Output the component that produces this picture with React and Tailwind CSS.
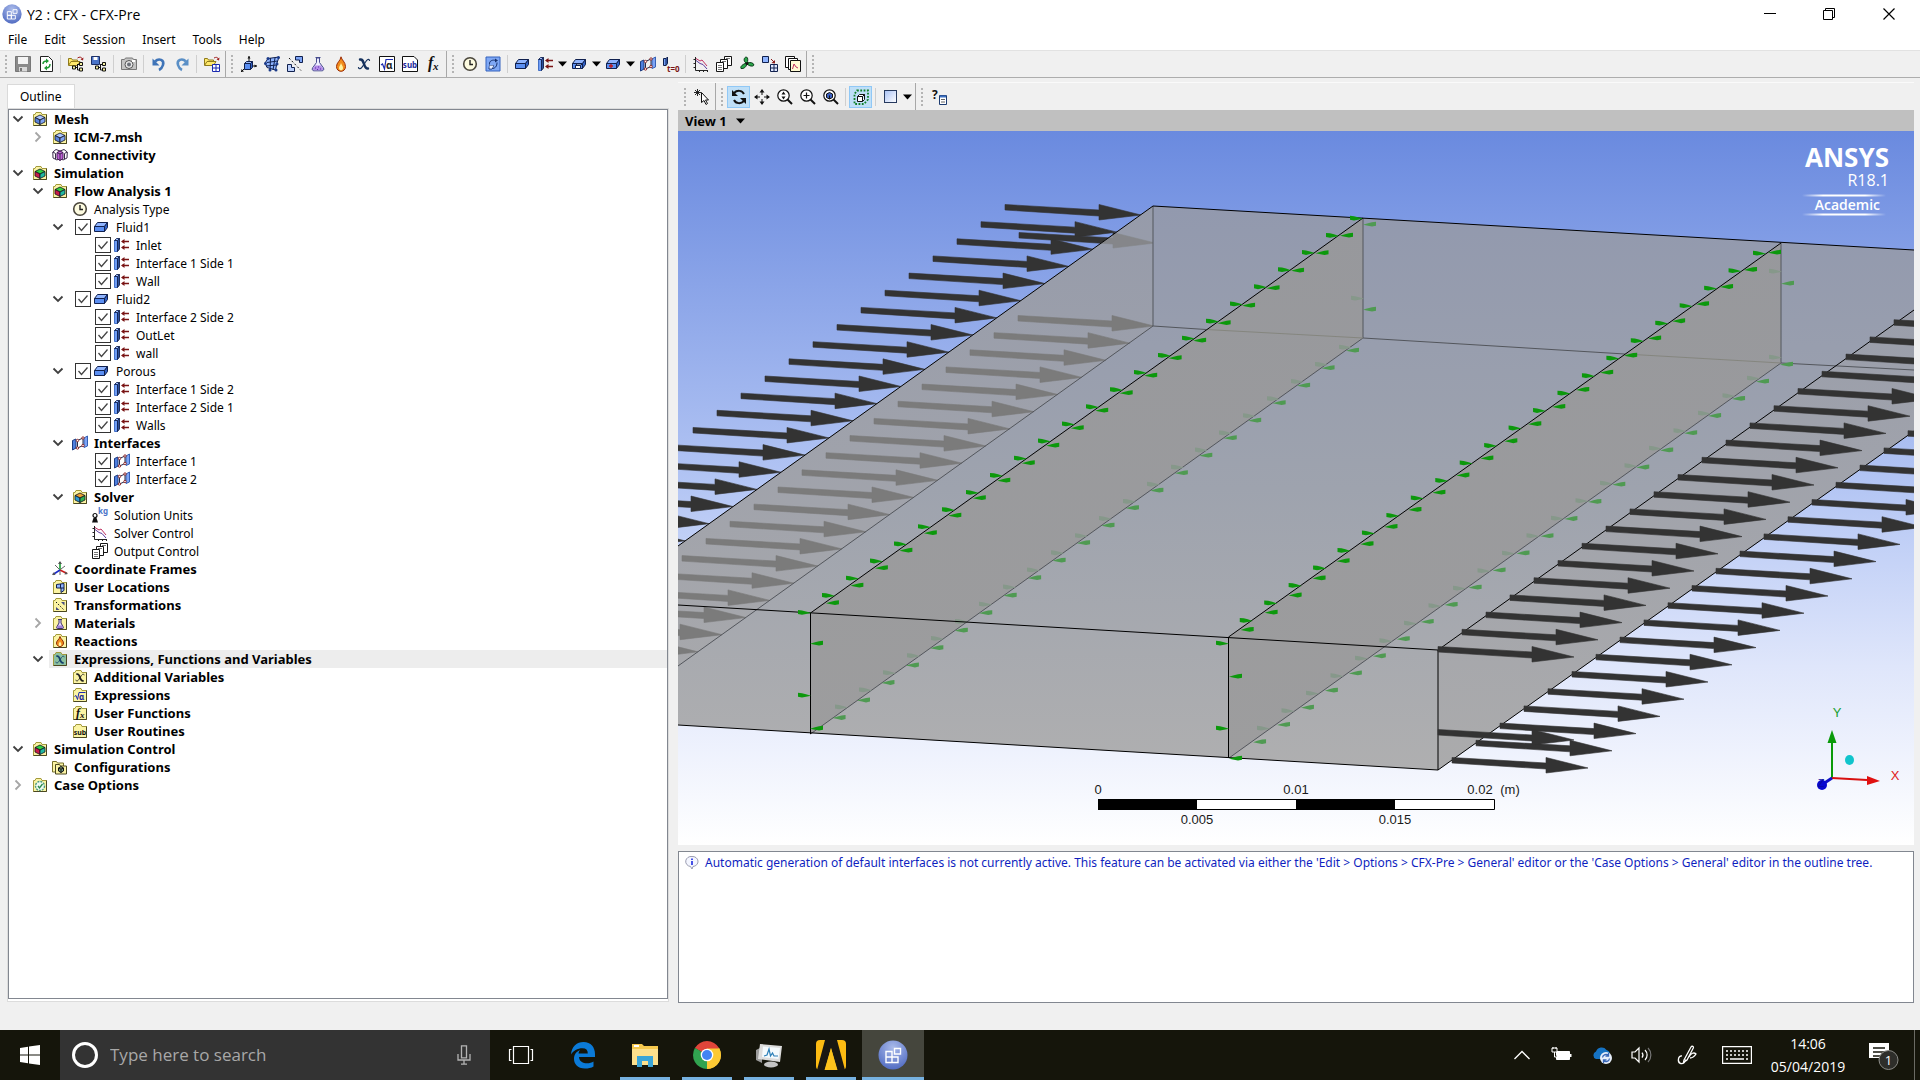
import React from 'react';

/* ---------- small icon drawings, all on a 16 x 16 grid ---------- */

const Svg = ({ children, className = 'h-4 w-4', box = '0 0 16 16' }) => (
  <svg viewBox={box} className={`shrink-0 overflow-visible ${className}`} fill="none" aria-hidden="true">
    {children}
  </svg>
);

const Folder = ({ fill = '#fbf4a4', children }) => (
  <>
    <path d="M1.5 3.5h1.5l1-2h5l1 2h4.5v11h-13z" fill={fill} stroke="#a39a3c" />
    <path d="M14.5 3.5v11h-13" stroke="#4a4720" />
    {children}
  </>
);

const Cube = ({ top, left, right }) => (
  <g stroke="#10131f" strokeWidth="0.8" strokeLinejoin="round">
    <path d="M3 6.500 8 4l5 2.500L8 9z" fill={top} />
    <path d="M3 6.500v4.500l5 2.500V9z" fill={left} />
    <path d="M13 6.500v4.500l-5 2.500V9z" fill={right} />
  </g>
);

const SolidBox = () => (
  <g stroke="#10204e" strokeLinejoin="round">
    <path d="M.5 7.500h10v5H.5z" fill="#5b8ff2" />
    <path d="M.5 7.500 3.500 3.500h10l-3 4z" fill="#8fb4ff" />
    <path d="M10.500 7.500l3-4v5l-3 4z" fill="#2f5fc4" />
  </g>
);

const Plate = () => (
  <g strokeWidth="0.9">
    <path d="M.5 3.500h3V14.500h-3z" fill="#6f9df5" stroke="#3565c0" />
    <path d="M3.500 3.500 5.500 1.500V12l-2 2.500z" fill="#2d4f9c" stroke="#10204e" />
    <path d="M.5 3.500 2.500 1.500h3l-2 2z" fill="#9dbcff" stroke="#10204e" />
  </g>
);

const BoundaryGlyph = () => (
  <>
    <Plate />
    <path d="M8.500 4.500H15M8.500 10.500H15" stroke="#7a1414" strokeWidth="1.300" />
    <path d="M7 4.500 10.500 2v5zM7 10.500 10.500 8v5z" fill="#7a1414" />
  </>
);

const InterfaceGlyph = () => (
  <>
    <path d="M.5 5.500 4 4v9L.5 15z" fill="#4f80e0" stroke="#1d3b80" />
    <path d="M12 3 15.500 1v10L12 12.500z" fill="#7da4f5" stroke="#3560b5" />
    <path d="M5.500 5.500 11 3M5.500 13 11 10.500M5.500 5.500V13M11 3v7.500" stroke="#23284a" />
    <g fill="#fff" stroke="#8a1c1c" strokeWidth="0.9">
      <circle cx="5.500" cy="5.500" r="1.200" />
      <circle cx="11" cy="3" r="1.200" />
      <circle cx="5.500" cy="13" r="1.200" />
      <circle cx="11" cy="10.500" r="1.200" />
    </g>
  </>
);

const FlaskGlyph = () => (
  <>
    <path d="M5.500 1.500h5M6.500 2v4.500L2.500 12c-.8 1.500 0 2.800 1.500 2.800h8c1.500 0 2.300-1.300 1.500-2.800L9.500 6.500V2z" fill="#eef" stroke="#444a8c" />
    <path d="M5 9.500h6l2 3c.3 1-.3 1.800-1.300 1.800H4.300c-1 0-1.600-.8-1.300-1.800z" fill="#b28ae8" />
    <path d="M5 12h1M8 11h1M10 13h1M7 13.500h1" stroke="#5b2fa8" />
  </>
);

const FlameGlyph = () => (
  <>
    <path d="M8 .8C8.500 4 12.500 6 12.500 10.500 12.500 13.500 10.500 15.300 8 15.300S3.500 13.500 3.500 10.500C3.500 6.500 7.500 5 8 .8z" fill="#f28c1c" stroke="#9c2c06" />
    <path d="M8 7c.5 2 2 2.800 2 5 0 1.500-1 2.300-2 2.300s-2-.8-2-2.300C6 10 7.500 9.500 8 7z" fill="#fff3a0" />
  </>
);

const ClockGlyph = () => (
  <>
    <circle cx="8" cy="8" r="6.300" fill="#fdfbe0" stroke="#4a463c" strokeWidth="1.600" />
    <path d="M8 4v4.500h3" stroke="#222" strokeWidth="1.400" />
  </>
);

const XGlyph = ({ color = '#14305c' }) => (
  <g stroke={color} strokeLinecap="round">
    <path d="M4 3.500c2.500-.5 3 1.500 4 4.500s2 5 4 4.500" strokeWidth="2.400" />
    <path d="M13.500 4.500C13 2.500 11 3.500 9.500 6l-3 4.500C5 13 3 13.500 2.500 11.500" strokeWidth="1.200" />
  </g>
);

const SheetGlyph = () => (
  <g fill="#fff" stroke="#151515">
    <path d="M8.500.5h7v9h-7z" />
    <path d="M4.500 3.500h7v9h-7z" />
    <path d="M.5 6.500h7v9h-7z" />
    <path d="M2 9.500h4M2 11.500h4M2 13.500h4M6 5.500h4M10 2.500h4" stroke="#777" />
  </g>
);

const ChartGlyph = () => (
  <>
    <path d="M2.500 1v13.500H15M.5 3.500h2M.5 7.500h2M.5 11.500h2M6.500 14v2M10.500 14v2M14.500 14v2" stroke="#222" />
    <path d="M3 2.500 7 5l2-1 5 6" stroke="#c03060" />
    <path d="M3 4.500l4 3 3 1 4 4.500" stroke="#5a3a9c" />
  </>
);

const TreeNodes = () => (
  <g stroke="#111" fill="#f5f0a0">
    <path d="M7 11.500h3M9.500 8v6M9.500 8.500h2M9.500 14h2" fill="none" />
    <path d="M4.500 10h3v3h-3zM11.500 6.500h3v3h-3zM11.500 12h3v3h-3z" />
  </g>
);

const OpenFolder = () => (
  <path d="M.5 9V2.500h3l1 1.500h5v1.500M.5 9.500 3 5.500h9l-2.500 4z" fill="#ffe96b" stroke="#8f7a1c" />
);

const Lens = ({ children }) => (
  <>
    <circle cx="6.500" cy="6.500" r="5.700" fill="#fff" stroke="#111" strokeWidth="1.200" />
    <path d="m10.500 10.500 4.500 4.500" stroke="#111" strokeWidth="2" />
    {children}
  </>
);

const Tiny = ({ x, y, size = 7, color = '#1c2a9c', children, italic, mid }) => (
  <text x={x} y={y} fontSize={size} fill={color} fontWeight="700" fontStyle={italic ? 'italic' : 'normal'} textAnchor={mid ? 'middle' : 'start'} fontFamily={italic ? 'Liberation Serif, serif' : 'Noto Sans, sans-serif'}>
    {children}
  </text>
);

const icons = {
  save: <><path d="M.5.5h15v15H.5z" fill="#8a8a8a" stroke="#777" /><path d="M3 1h10v7H3z" fill="#f4f4f4" /><path d="M4 11h8v4.500H4z" fill="#d9d9d9" /><path d="M5 12h2v3H5z" fill="#777" /></>,
  refresh: <><path d="M2.500.5h8l4 4v11h-12z" fill="#fff" stroke="#222" /><path d="M5 8c0-2 1.500-3 4-3M12 8c0 2.500-1.500 4-4 4" stroke="#1f9a35" strokeWidth="1.500" /><path d="M8 2.500 11 5 8 7.500zM9 9.500 6 12l3 2.500z" fill="#1f9a35" /></>,
  folderTree: <><OpenFolder /><TreeNodes /><path d="M9.500 2c2-1.500 4-1 5 1" stroke="#a02020" /><path d="m15.500 1.500-.5 3-2.500-1z" fill="#a02020" /></>,
  saveTree: <><path d="M.5.500h8v8h-8z" fill="#4a74c8" stroke="#1c2f66" /><path d="M2.500 1h4v3h-4z" fill="#fff" /><TreeNodes /></>,
  camera: <><path d="M.5 3.500h3l1-1.500h7l1 1.500h3v10H.500z" fill="#c4c4c4" stroke="#777" /><circle cx="8" cy="8.500" r="4" fill="#e8e8e8" stroke="#555" /><circle cx="8" cy="8.500" r="2" fill="#6b6f78" /><path d="M11 5h3" stroke="#fff" strokeWidth="2" /></>,
  undo: <><path d="M4 5.500C8 1.500 13.500 4 12 9c-.7 2.500-2 4-4 5" stroke="#3f74b8" strokeWidth="2.600" /><path d="M1.500 2.500v7h7z" fill="#3f74b8" /></>,
  redo: <><path d="M12 5.500C8 1.500 2.500 4 4 9c.7 2.500 2 4 4 5" stroke="#5a8fc6" strokeWidth="2.600" /><path d="M14.500 2.500v7h-7z" fill="#5a8fc6" /></>,
  folderGrid: <><OpenFolder /><path d="M8.500 8.500h7v7h-7zM12 8.500v7M8.500 12h7" fill="#fff" stroke="#1a2ab0" /><path d="M10 2c2-1 3.500-1 4.500 1" stroke="#a02020" /><path d="m15.500 1.500-.5 3-2.500-1z" fill="#a02020" /></>,
  axesBox: <><path d="M8 0v6M11 10h5M4 12l-4 4" stroke="#111" /><path d="m8 0-1.500 2.500h3zM16 10l-2.500-1.500v3zM0 16l.5-3 2.500 2.500z" fill="#111" /><path d="M3.500 7.500h6v6h-6z" fill="#5b8ff2" stroke="#10204e" /><path d="m3.500 7.500 2-2h6l-2 2z" fill="#9dbcff" stroke="#10204e" /><path d="m9.500 7.500 2-2v6l-2 2z" fill="#2f5fc4" stroke="#10204e" /></>,
  mesh: <><path d="M4 2.500 15 1l-2 6-1.500 7L3 11.500 1 7z" fill="#8fb4ff" stroke="#10204e" /><path d="M3 6.500 13.500 5M6.500 2 6 15M11 2l-2 12M2 10l11-1" stroke="#10204e" /><g fill="#1c3b8a"><circle cx="4" cy="2.500" r="1.500" /><circle cx="14.500" cy="1.500" r="1.500" /><circle cx="1.500" cy="7.500" r="1.500" /><circle cx="13" cy="8" r="1.500" /><circle cx="6" cy="14" r="1.500" /><circle cx="12" cy="14" r="1.500" /></g></>,
  transform: <><path d="M8.500.5h7v6h-3v-2.500h-4z" fill="#7da4f5" stroke="#10204e" /><path d="M.5 8.500h4v3h3v4h-7z" fill="#bcd0fb" stroke="#10204e" /><path d="m2 2 12 12.500" stroke="#111" strokeDasharray="2 2" /></>,
  flask: <FlaskGlyph />,
  flame: <FlameGlyph />,
  variable: <XGlyph />,
  sqrt: <><path d="M.5.5h15v15H.5z" fill="#fff" stroke="#111" /><path d="m2 9 1.500-1 2 5L7 3.500h7" stroke="#1c2ab0" strokeWidth="1.200" /><Tiny x={7} y={13} size={10} color="#222">α</Tiny></>,
  sub: <><path d="M.5.5H12L15.500 4v11.500H.5z" fill="#fff" stroke="#111" /><Tiny x={8} y={12} size={8} mid>sub</Tiny></>,
  fx: <><Tiny x={3} y={12} size={16} color="#111" italic>f</Tiny><Tiny x={8} y={14} size={11} color="#111" italic>x</Tiny></>,
  clock: <ClockGlyph />,
  simType: <><path d="M1 1h14v14H1z" fill="#7fa8f5" stroke="#3563be" /><path d="M4.500 8.500C4 4.500 8 3.500 11 4.500M4.500 9.500h4l-1.500 3.500-3 0zM12 6.500c0 4-2 6-5 6" stroke="#16306c" /><path d="m10 2.500 3 2-3 2z" fill="#16306c" /><path d="M4.500 9.500h4l-1.500 3h-2.500z" fill="#e8f0ff" /></>,
  solid: <SolidBox />,
  boundary: <BoundaryGlyph />,
  subdomain: <><SolidBox /><path d="M3.500 9.500h5v3h-5zM3.500 9.500 5 8h5l-1.500 1.500" fill="#fff" stroke="#10204e" /></>,
  source: <><SolidBox /><path d="M3 10h4M5 8v4" stroke="#c01818" strokeWidth="1.300" /></>,
  iface: <InterfaceGlyph />,
  init: <><path d="M.5 2.500h2.500v7H.5z" fill="#6f9df5" stroke="#10204e" /><path d="M3 2.500 4.500 1v6.500L3 9.500" fill="#2d4f9c" stroke="#10204e" /><Tiny x={4} y={16} size={8} color="#7a1414">t=0</Tiny></>,
  chart: <ChartGlyph />,
  sheets: <SheetGlyph />,
  fan: <><path d="M7 7C4 5 5 1 7.500 1c2 1 1 4 1 6 2-1 6-.5 6.500 2-1 2-5 1-7-1-1 3-3 5-6 4.500C1 10 4 8.500 7 7z" fill="#2aa84a" stroke="#0c3a1a" /><circle cx="8" cy="7.500" r="1.500" fill="#111" /></>,
  config: <><path d="M.5.5h6v6h-6z" fill="#8fb4ff" stroke="#10204e" /><path d="M8.500 8.500h7v7h-7zM12 8.500v7M8.500 12h7" fill="#dfe8ff" stroke="#10204e" /><path d="M9 3l3 3" stroke="#8a1c1c" /><path d="M13 7.500V4L9.500 7z" fill="#8a1c1c" /></>,
  reports: <><path d="M.5.500h9v11h-9z" fill="#fff" stroke="#111" /><path d="M3.500 2.500h9v11h-9z" fill="#fff" stroke="#111" /><path d="M5.500 4.500h10v11h-10z" fill="#fffbd5" stroke="#111" /><path d="m7.500 13 1.500-5 2 3 2 1" stroke="#c03060" /></>,
  pick: <><path d="M3.500 0v7M0 3.500h7M1 1l5 5M6 1 1 6" stroke="#111" strokeWidth="0.9" /><path d="M7.500 3.500v10l2.500-2 2 4 1.500-1-2-3.500h3z" fill="#fff" stroke="#111" /></>,
  rotate: <><path d="M3 4c3-3 8-3 10 1M13 12c-3 3-8 3-10-1" stroke="#111" strokeWidth="2" /><path d="M1 1v6h6zM15 15V9H9z" fill="#111" /></>,
  pan: <><path d="M8 1v14M1 8h14" stroke="#111" strokeDasharray="5 4" /><path d="M8 0 5.500 3.500h5zM8 16l-2.500-3.500h5zM0 8l3.500-2.500v5zM16 8l-3.500-2.500v5z" fill="#111" /></>,
  zoom: <Lens><path d="M6.500 2.500 4.500 5.500h4zM6.500 10.500l-2-3h4z" fill="#111" /></Lens>,
  zoomBox: <Lens><path d="M6.500 3.500v6M3.500 6.500h6" stroke="#111" strokeWidth="1.200" /></Lens>,
  fit: <Lens><path d="M3.500 5 6.500 3.500 9.500 5v3.500L6.500 10l-3-1.500z" fill="#3a5fc0" stroke="#111" /><path d="M6.500 6.500V10" stroke="#111" /></Lens>,
  highlight: <><path d="M4 1.500h11v9L11 15H1.500V5z" stroke="#12802a" strokeWidth="1.800" strokeDasharray="1.800 1.500" /><path d="M4.500 7.500h5v5h-5zM4.500 7.500l2-2h5l-2 2M11.500 5.500v5l-2 2" fill="#fff" stroke="#111" /></>,
  viewport: <><rect x="1.500" y="1.500" width="12" height="12" fill="url(#vpfill)" stroke="#26395e" /><defs><linearGradient id="vpfill" x1="0" y1="0" x2="1" y2="1"><stop stopColor="#a9c2f5" /><stop offset="1" stopColor="#fff" /></linearGradient></defs></>,
  helpList: <><Tiny x={1} y={10} size={12} color="#111">?</Tiny><path d="M8.500 6.500h7v9h-7z" fill="#fff" stroke="#1c3b70" /><path d="M9 7.500h6" stroke="#3a6ec0" strokeWidth="2" /><path d="M10 10.500h4M10 13h4" stroke="#666" /></>,

  meshFolder: <Folder><Cube top="#a9c4ff" left="#5b84dc" right="#7fa3f0" /></Folder>,
  connectivity: <><path d="M.8 5 4 2.500 8 4v7l-3 2-4-2zM15.300 5 12 2.500 8 4v7l3 2 4-2z" fill="#fff" stroke="#3a2a4c" /><path d="M5 5.500 8 4l3 1.500v6L8 13.500 5 11.500z" fill="#c060d8" stroke="#4a1a5c" /><path d="M8 7v6.500M5 5.500 8 7l3-1.500M1 5l2.500 1.500V12M15 5l-2.500 1.500V12" stroke="#3a2a4c" /></>,
  simFolder: <Folder><Cube top="#30d040" left="#c81c48" right="#20b8a0" /></Folder>,
  solverFolder: <Folder><Cube top="#e8a030" left="#2a9ad0" right="#30b050" /></Folder>,
  units: <><circle cx="3" cy="8.500" r="2" stroke="#111" strokeWidth="1.200" /><path d="M0 15.500 1.500 11h3L6 15.500z" fill="#111" /><Tiny x={6} y={7} size={8} color="#4a74c8">kg</Tiny></>,
  frames: <><path d="M8 9V1" strokeWidth="1.600" stroke="#18a030" /><path d="m8 9 7 3.500" stroke="#c81c1c" strokeWidth="1.600" /><path d="m8 9-7 4.500" stroke="#1c2ac8" strokeWidth="1.600" /><path d="m8 0-2 3h4zM16 13l-3.500.5 1-3zM0 14l3.500 0-1.500-3z" fill="#555" /><path d="m3 4 4 4M13 5l-4 3M8 10v4" stroke="#666" /></>,
  locations: <Folder><path d="M4.500 5.500 12 4.500v7l-3 2V9H4.500z" fill="#8fb4ff" stroke="#10204e" /><path d="M8.500 5v4H12" stroke="#10204e" /></Folder>,
  transFolder: <Folder><path d="M9 5h3.500v3.500zM4 10v3h3.500z" fill="#444c80" /><path d="m4 5 8 8" stroke="#111" strokeDasharray="1.500 1.500" /></Folder>,
  materials: <Folder><path d="M6 4.500h4M7 5v3l-2.500 4.500c0 1 .5 1 1.500 1h4c1 0 1.500 0 1.500-1L9 8V5" fill="#e8dcff" stroke="#3a2f6c" /><path d="M6 10.500h4l1 2.500H5z" fill="#a080d8" /></Folder>,
  reactions: <Folder><path d="M8 3.500c.3 2.500 3.500 3.500 3.500 6.500 0 2-1.500 3.500-3.500 3.500S4.500 12 4.500 10c0-2.500 3-3.500 3.500-6.500z" fill="#f28c1c" stroke="#8c2c06" /><path d="M8 8.500c1 1.500 1.300 2 1.300 3S8.700 13 8 13s-1.300-.5-1.300-1.500.3-1.500 1.300-3z" fill="#fff3a0" /></Folder>,
  exprFolder: <Folder fill="#8cc0a0"><g transform="translate(2 2.500) scale(.75)"><XGlyph color="#14406c" /></g></Folder>,
  varFolder: <Folder><g transform="translate(2 2.500) scale(.75)"><XGlyph color="#222" /></g></Folder>,
  exprs: <Folder><path d="m2.500 9.500 1.500-1 1.500 4L7 5.500h6.500" stroke="#1c2ab0" /><Tiny x={7} y={13} size={8}>α</Tiny></Folder>,
  funcs: <Folder><Tiny x={4} y={11.500} size={12} color="#111" italic>f</Tiny><Tiny x={8} y={13} size={9} color="#111" italic>x</Tiny></Folder>,
  routines: <Folder><Tiny x={8} y={12} size={7} color="#111" mid>sub</Tiny></Folder>,
  configs: <><path d="M.5 2.500h4l1 1.500h6v9h-11z" fill="#fbf4a4" stroke="#77702c" /><path d="M3.500 5.500h4l1 1.500h6v8h-11z" fill="#fbf4a4" stroke="#4a4720" /><path d="m6.500 9 2.500-1.500L11.500 9v3L9 13.500 6.500 12zM9 10v3.500M6.500 9 9 10l2.500-1" fill="#6f9a80" stroke="#111" /></>,
  caseOptions: <Folder><circle cx="8" cy="9" r="4.500" fill="#eefaf2" stroke="#4a9a80" strokeDasharray="2 1" strokeWidth="1.400" /><path d="m6 9 1.500 2L10.500 7" stroke="#2a8a4a" strokeWidth="1.300" /></Folder>,
};

const Icon = ({ name, className }) => <Svg className={className}>{icons[name]}</Svg>;

/* ---------- toolbars ---------- */

const Handle = () => (
  <span className="flex w-[11px] shrink-0 justify-center">
    <Svg className="h-5 w-1" box="0 0 4 20">
      <path d="M2 1v19" stroke="#b4b4b4" strokeWidth="2" strokeDasharray="2 2" />
    </Svg>
  </span>
);
const Sep = () => <span className="mx-[3px] h-[18px] w-px shrink-0 bg-[#cfcfcf]" />;
const Caret = ({ label }) => (
  <button type="button" aria-label={label} className="flex h-6 w-[11px] shrink-0 items-center justify-center">
    <Svg className="h-[6px] w-[9px]" box="0 0 9 6"><path d="M0 .5h9L4.500 5.500z" fill="#000" /></Svg>
  </button>
);

const Tools = ({ items }) =>
  items.map(([name, label, on], i) => {
    if (name === '|') return <Sep key={i} />;
    if (name === 'v') return <Caret key={i} label={label} />;
    return (
      <button key={i} type="button" aria-label={label} className={`flex h-[22px] w-[23px] shrink-0 items-center justify-center ${on ? 'border border-[#90c8f6] bg-[#bfdff7]' : ''}`}>
        <Icon name={name} />
      </button>
    );
  });

const Section = ({ items, className = '' }) => (
  <div className={`flex h-full items-center border-r border-[#a8a8a8] pr-[2px] ${className}`}>
    <Handle />
    <Tools items={items} />
  </div>
);

const fileTools = [['save', 'Save'], ['refresh', 'Refresh'], ['|'], ['folderTree', 'Load case'], ['saveTree', 'Save case'], ['|'], ['camera', 'Snapshot'], ['|'], ['undo', 'Undo'], ['redo', 'Redo'], ['|'], ['folderGrid', 'Import mesh']];
const insertTools = [['axesBox', 'Coordinate frame'], ['mesh', 'User location'], ['transform', 'Transform'], ['flask', 'Material'], ['flame', 'Reaction'], ['variable', 'Additional variable'], ['sqrt', 'Expression'], ['sub', 'User routine'], ['fx', 'User function']];
const physicsTools = [['clock', 'Analysis type'], ['simType', 'Simulation type'], ['|'], ['solid', 'Domain'], ['boundary', 'Boundary'], ['v', 'Boundary list'], ['subdomain', 'Subdomain'], ['v', 'Subdomain list'], ['source', 'Source point'], ['v', 'Source list'], ['iface', 'Domain interface'], ['init', 'Initialisation'], ['|'], ['chart', 'Solver control'], ['sheets', 'Output control'], ['fan', 'Turbo mode'], ['config', 'Configurations'], ['reports', 'Reports']];
const viewTools = [['rotate', 'Rotate', true], ['pan', 'Pan'], ['zoom', 'Zoom'], ['zoomBox', 'Zoom box'], ['fit', 'Fit view'], ['|'], ['highlight', 'Highlighting', true], ['|'], ['viewport', 'Viewport layout'], ['v', 'Viewport list']];

/* ---------- outline tree: [level, label, icon, open state, checkbox, bold] ---------- */

const B = true;
const rows = [
  [0, 'Mesh', 'meshFolder', 'open', 0, B],
  [1, 'ICM-7.msh', 'meshFolder', 'closed', 0, B],
  [1, 'Connectivity', 'connectivity', '', 0, B],
  [0, 'Simulation', 'simFolder', 'open', 0, B],
  [1, 'Flow Analysis 1', 'simFolder', 'open', 0, B],
  [2, 'Analysis Type', 'clock', '', 0],
  [2, 'Fluid1', 'solid', 'open', 1],
  [3, 'Inlet', 'boundary', '', 1],
  [3, 'Interface 1 Side 1', 'boundary', '', 1],
  [3, 'Wall', 'boundary', '', 1],
  [2, 'Fluid2', 'solid', 'open', 1],
  [3, 'Interface 2 Side 2', 'boundary', '', 1],
  [3, 'OutLet', 'boundary', '', 1],
  [3, 'wall', 'boundary', '', 1],
  [2, 'Porous', 'solid', 'open', 1],
  [3, 'Interface 1 Side 2', 'boundary', '', 1],
  [3, 'Interface 2 Side 1', 'boundary', '', 1],
  [3, 'Walls', 'boundary', '', 1],
  [2, 'Interfaces', 'iface', 'open', 0, B],
  [3, 'Interface 1', 'iface', '', 1],
  [3, 'Interface 2', 'iface', '', 1],
  [2, 'Solver', 'solverFolder', 'open', 0, B],
  [3, 'Solution Units', 'units', '', 0],
  [3, 'Solver Control', 'chart', '', 0],
  [3, 'Output Control', 'sheets', '', 0],
  [1, 'Coordinate Frames', 'frames', '', 0, B],
  [1, 'User Locations', 'locations', '', 0, B],
  [1, 'Transformations', 'transFolder', '', 0, B],
  [1, 'Materials', 'materials', 'closed', 0, B],
  [1, 'Reactions', 'reactions', '', 0, B],
  [1, 'Expressions, Functions and Variables', 'exprFolder', 'open', 0, B, true],
  [2, 'Additional Variables', 'varFolder', '', 0, B],
  [2, 'Expressions', 'exprs', '', 0, B],
  [2, 'User Functions', 'funcs', '', 0, B],
  [2, 'User Routines', 'routines', '', 0, B],
  [0, 'Simulation Control', 'simFolder', 'open', 0, B],
  [1, 'Configurations', 'configs', '', 0, B],
  [0, 'Case Options', 'caseOptions', 'closed', 0, B],
];
const indent = ['pl-0', 'pl-5', 'pl-10', 'pl-[60px]'];

const Row = ({ row: [level, label, icon, state, check, bold, selected], id }) => (
  <li role="treeitem" aria-level={level + 1} aria-selected={!!selected} className={`flex h-[18px] items-center ${indent[level]}`}>
    <span className="flex w-5 shrink-0 pl-[3px]">
      {state && (
        <button type="button" aria-label={`${state === 'open' ? 'Collapse' : 'Expand'} ${label}`}>
          <Svg className="h-3 w-3" box="0 0 12 12">
            {state === 'open' ? <path d="M1.500 3.500 6 8l4.500-4.500" stroke="#404040" strokeWidth="1.800" /> : <path d="M3.500 1.500 8 6l-4.500 4.500" stroke="#a6a6a6" strokeWidth="1.800" />}
          </Svg>
        </button>
      )}
    </span>
    <div className={`flex h-full flex-1 items-center ${selected ? 'bg-[#ededed]' : ''} ${check ? 'gap-[3px] pl-[6px]' : 'gap-[6px] pl-[3px]'}`}>
      {!!check && (
        <span className="relative h-4 w-4 shrink-0">
          <input id={id} type="checkbox" defaultChecked className="peer block h-4 w-4 appearance-none border border-[#333] bg-white" />
          <svg viewBox="0 0 16 16" className="pointer-events-none absolute inset-0 hidden h-4 w-4 peer-checked:block" fill="none" aria-hidden="true">
            <path d="m3.500 8 3 3.500L12.500 4.500" stroke="#444" strokeWidth="1.300" />
          </svg>
        </span>
      )}
      <Icon name={icon} />
      <label htmlFor={check ? id : undefined} className={`whitespace-nowrap ${bold ? 'text-[13px] leading-[18px] font-bold' : 'pt-px text-xs leading-[18px]'} ${check ? 'pl-[3px]' : ''}`}>{label}</label>
    </div>
  </li>
);

/* ---------- 3D view ---------- */

const seq = (n, x, y, dx, dy) => Array.from({ length: n }, (_, i) => [x + i * dx, y + i * dy]);
const Arrows = ({ pts, fill = '#333333' }) => (
  <g fill={fill}>
    {pts.map(([x, y], i) => <path key={i} transform={`translate(${x} ${y})`} d="M0-2.500 94 3V-2.500L136 8 94 13V9L0 3z" stroke={fill} strokeWidth="0.600" />)}
  </g>
);
/* small cones: "r" points right from its blunt left end, "l" points left from its blunt right end */
const Cones = ({ pts, dir, fill = '#0c980c' }) => (
  <g fill={fill}>
    {pts.map(([x, y], i) => <path key={i} transform={`translate(${x} ${y}) scale(${dir === 'r' ? 1 : -1} 1)`} d="M0-2.200 4-1.800 8-.8 13 .8 8 1.800 4 2.600 0 1.800z" />)}
  </g>
);

const DIM = '#4f9a52';
const FAINT = '#86988a';

const Scene = () => (
  <svg viewBox="678 131 1236 714" preserveAspectRatio="xMidYMid slice" className="block h-full w-full" role="img" aria-label="Model view">
    <defs>
      <linearGradient id="sky" x1="0" y1="131" x2="0" y2="845" gradientUnits="userSpaceOnUse">
        <stop offset="0" stopColor="#6a8adf" />
        <stop offset="0.500" stopColor="#b4c6f4" />
        <stop offset="0.750" stopColor="#dfe6fb" />
        <stop offset="1" stopColor="#ffffff" />
      </linearGradient>
      <linearGradient id="body" x1="0" y1="206" x2="0" y2="770" gradientUnits="userSpaceOnUse">
        <stop offset="0" stopColor="#9299ae" />
        <stop offset="0.500" stopColor="#9ea3ae" />
        <stop offset="1" stopColor="#afafb0" />
      </linearGradient>
      <linearGradient id="side" x1="0" y1="206" x2="0" y2="770" gradientUnits="userSpaceOnUse">
        <stop offset="0" stopColor="#969baa" />
        <stop offset="1" stopColor="#ababac" />
      </linearGradient>
      <linearGradient id="plane" x1="0" y1="218" x2="0" y2="758" gradientUnits="userSpaceOnUse">
        <stop offset="0" stopColor="#97989c" />
        <stop offset="1" stopColor="#9d9d9e" />
      </linearGradient>
      <linearGradient id="rule" x1="0" x2="1">
        <stop offset="0" stopColor="#fff" stopOpacity="0" />
        <stop offset="0.250" stopColor="#fff" />
        <stop offset="0.750" stopColor="#fff" />
        <stop offset="1" stopColor="#fff" stopOpacity="0" />
      </linearGradient>
      <clipPath id="inside"><path d="M1153 206V400L678 740V546z" /></clipPath>
    </defs>
    <rect x="678" y="131" width="1236" height="714" fill="url(#sky)" />

    <Arrows pts={seq(20, 1005, 207, -24, 17.150)} />
    <Arrows pts={[[1019, 235]]} />

    <path d="M1153 206 1914 250V431L1438 770 678 725V546z" fill="url(#body)" />
    <path d="M1153 206V326L678 666V546zM1438 650 1914 310V431L1438 770z" fill="url(#side)" />
    <path d="M810.500 613 1363 218V338L810.500 734zM1228.500 637 1781 243V363L1229 758z" fill="url(#plane)" />

    <g clipPath="url(#inside)">
      <Arrows pts={[[1019, 235]]} fill="#85868a" />
      <Arrows pts={seq(20, 1018, 318, -24, 17.150)} fill="#7b7b7b" />
    </g>

    <g stroke="#53565c" fill="none">
      <path d="M1153 206V326L678 666M1153 326 1206 329.500M1363 338 1625 354M1781 363 1914 370" />
      <path d="M1363 218V338L810.500 734M1781 243V363L1229 758" />
      <path d="M1206 329.500 1363 338M1625 354 1781 363" stroke="#85867f" />
    </g>

    <Cones dir="r" fill={FAINT} pts={[...seq(22, 1339, 347, -24, 17.130), ...seq(21, 1747, 378, -24.500, 17.500), [1351, 298], [1769, 271], [1769, 357]]} />
    <Cones dir="l" fill={DIM} pts={[...seq(22, 1359, 350, -24.450, 17.490), ...seq(22, 1769, 381, -23.950, 17.160), [1376, 224], [1376, 309], [1794, 283], [1793, 364]]} />

    <g stroke="#000" fill="none">
      <path d="M1914 250 1153 206 678 546M678 605 1438 650V770L678 725" />
      <path d="M810.500 734V613L1363 218M1228.500 758V637L1781 243" />
      <path d="M1438 650 1914 310M1438 770 1914 431" />
    </g>

    <Cones dir="r" pts={[...seq(24, 1350, 218, -24, 17.140), ...seq(22, 1753, 253, -24.440, 17.480), [798, 695], [1216, 643], [1216, 728]]} />
    <Cones dir="l" pts={[...seq(22, 1353, 235, -24.480, 17.500), ...seq(23, 1781, 252, -23.970, 17.140), [823, 643], [823, 728], [1242, 676], [1242, 758]]} />

    <Arrows pts={seq(20, 1438, 649, 24, -17.200)} />
    <Arrows pts={seq(20, 1452, 760, 24, -17.200)} />
    <Arrows pts={[[1438, 732]]} />

    <g fill="#fff" fontFamily="Open Sans, sans-serif" textAnchor="end">
      <text x="1889" y="167" fontSize="26" fontWeight="700">ANSYS</text>
      <text x="1889" y="186" fontSize="16">R18.1</text>
      <text x="1880" y="210" fontSize="14" fontWeight="600">Academic</text>
      <path d="M1802 194.500h84v2h-84zM1802 213.500h84v2h-84z" fill="url(#rule)" />
    </g>

    <path d="M1098.500 799.500h396v10h-396z" fill="#fff" stroke="#000" />
    <path d="M1098 799h99v11h-99zM1296 799h99v11h-99z" fill="#000" />
    <g fontFamily="Liberation Sans, sans-serif" fontSize="13" fill="#1a1a1a" textAnchor="middle">
      <text x="1098" y="794">0</text>
      <text x="1296" y="794">0.01</text>
      <text x="1480" y="794">0.02</text>
      <text x="1510" y="794">(m)</text>
      <text x="1197" y="824">0.005</text>
      <text x="1395" y="824">0.015</text>
    </g>

    <path d="M1832 779V742" stroke="#0a9a0a" strokeWidth="2" />
    <path d="m1832 730 4.500 13h-9z" fill="#0a9a0a" />
    <path d="m1832 778 35 2" stroke="#d81010" strokeWidth="2" />
    <path d="m1880 781-13-5v9z" fill="#e01010" />
    <path d="m1832 778-9 6" stroke="#1010c8" strokeWidth="3" />
    <circle cx="1822" cy="785" r="5" fill="#0808d0" />
    <ellipse cx="1849.500" cy="760" rx="4.500" ry="5" fill="#10c4cc" />
    <g fontFamily="Liberation Sans, sans-serif" fontSize="13" textAnchor="middle">
      <text x="1837" y="717" fill="#18a030">Y</text>
      <text x="1895" y="780" fill="#e02020">X</text>
      <text x="1821" y="787" fontSize="11" fill="#0808a0">Z</text>
    </g>
  </svg>
);

/* ---------- application mark ---------- */

const AppMark = ({ className, id }) => (
  <svg viewBox="0 0 30 30" className={`shrink-0 ${className}`} fill="none" aria-hidden="true">
    <defs><radialGradient id={id} cx=".5" cy=".25" r=".8"><stop stopColor="#a9baea" /><stop offset="1" stopColor="#4d68c0" /></radialGradient></defs>
    <circle cx="15" cy="15" r="14.500" fill={`url(#${id})`} />
    <path d="M8 11.500h6v5.500H8zM8 17h6v5.500H8zM14 17h6v5.500h-6zM16.500 8.500h6V14h-6z" stroke="#fff" strokeWidth="1.400" />
  </svg>
);

/* ---------- taskbar ---------- */

const TaskButton = ({ label, children, open, active }) => (
  <button type="button" aria-label={label} className={`relative flex h-full w-[62px] shrink-0 items-center justify-center ${active ? 'bg-[#45463d]' : ''}`}>
    {children}
    {open && <span className={`absolute bottom-0 h-[3px] bg-[#76b1e0] ${active ? 'inset-x-0' : 'inset-x-[6px]'}`} />}
  </button>
);

const Tray = ({ label, w = 'w-10', children }) => (
  <button type="button" aria-label={label} className={`flex h-full shrink-0 items-center justify-center ${w}`}>{children}</button>
);

const Taskbar = () => (
  <footer className="flex h-[50px] shrink-0 items-center bg-[#15150b] font-['Open_Sans',sans-serif] text-white">
    <button type="button" aria-label="Start" className="flex h-full w-[60px] items-center justify-center">
      <Svg className="h-5 w-5" box="0 0 20 20"><path d="M0 3l8-1.200V9.500H0zM9 1.600 20 0v9.500H9zM0 10.500h8v7.700L0 17zM9 10.500h11V20L9 18.400z" fill="#fff" /></Svg>
    </button>
    <div className="flex h-full w-[430px] shrink-0 items-center bg-[#333333] pr-[17px] pl-3">
      <Svg className="h-[26px] w-[26px]" box="0 0 26 26"><circle cx="13" cy="13" r="11.500" stroke="#fff" strokeWidth="3" /></Svg>
      <input type="text" aria-label="Search" placeholder="Type here to search" className="ml-3 min-w-0 flex-1 bg-transparent text-[17px] outline-none placeholder:text-[#a8a8a8]" />
      <button type="button" aria-label="Voice search">
        <Svg className="h-5 w-[18px]" box="0 0 18 20"><path d="M6.500.8h5v12h-5zM3 9v6h12V9M9 15v4M6 19.200h6" stroke="#b4b4b4" strokeWidth="1.300" /></Svg>
      </button>
    </div>
    <div className="flex h-full">
      <TaskButton label="Task View">
        <Svg className="h-5 w-6" box="0 0 24 20"><path d="M4.500 1.500h15v17h-15zM2.500 4.500h-2v11h2M21.500 4.500h2v11h-2" stroke="#fff" strokeWidth="1.200" /></Svg>
      </TaskButton>
      <TaskButton label="Edge">
        <Svg className="h-7 w-7" box="0 0 28 28"><path d="M2 13.500C2.500 5.500 8 1 14.500 1 22 1 26 6.500 26 13v3H10c.3 4.500 4 6.300 8 6.300 2.500 0 5-.8 6.500-1.900v5C22.500 26.700 19 27.500 16 27.500 8.500 27.500 5 23 5 17.800 5 13.500 7.500 10.500 11 9c-1 1.200-1.300 2.300-1.400 3.400h9.200C18.800 9 17 7.200 13.500 7.200 8.500 7.200 4 9.700 2 13.500z" fill="#0b7ad8" /></Svg>
      </TaskButton>
      <TaskButton label="File Explorer" open>
        <Svg className="h-7 w-7" box="0 0 28 28"><path d="M1 3h10l2 2h14v18H1z" fill="#f5c84e" /><path d="M1 8h26v16H1z" fill="#fde08c" /><path d="M3 4h5v2H3z" fill="#fff" /><path d="M6 15h16v11h-5v-6h-6v6H6z" fill="#3aa5d8" /></Svg>
      </TaskButton>
      <TaskButton label="Chrome" open>
        <Svg className="h-7 w-7" box="0 0 28 28">
          <path d="M14 14 1.880 7A14 14 0 0 1 26.120 7z" fill="#e0453a" />
          <path d="M14 14 26.120 7A14 14 0 0 1 14 28z" fill="#fcc934" />
          <path d="M14 14v14A14 14 0 0 1 1.880 7z" fill="#31a350" />
          <path d="M14 7.500h12.300A14 14 0 0 1 14 28l5.600-10.500z" fill="#fcc934" />
          <path d="M8.400 17.200 1.880 7l6.500 4z" fill="#31a350" />
          <circle cx="14" cy="14" r="6.300" fill="#fff" /><circle cx="14" cy="14" r="5" fill="#4384f3" />
        </Svg>
      </TaskButton>
      <TaskButton label="Solver monitor" open>
        <Svg className="h-7 w-7" box="0 0 28 28"><path d="m1 9 6-3v16l-6-3z" fill="#9a9a9a" /><path d="M5 3 27 5l-2 16L3 18z" fill="#dcdcdc" /><path d="M8 5.500 25 7l-1.500 11L7 16z" fill="#f4fafd" /><path d="m9 15 3-1 2-6 1.500 7 2-3 1.500 3h4" stroke="#2c7fb8" strokeWidth="1.200" /><ellipse cx="16" cy="23.500" rx="7" ry="3" fill="#c4c4c4" /></Svg>
      </TaskButton>
      <TaskButton label="Workbench" open>
        <Svg className="h-[30px] w-[30px]" box="0 0 30 30"><rect width="30" height="30" rx="4" fill="#fdbb12" /><path d="M9 0h12l8 30h-8L15 8 9 30H1z" fill="#1a1712" /><path d="m15 8 6.500 22h-13z" fill="#fdc21c" /></Svg>
      </TaskButton>
      <TaskButton label="CFX-Pre" open active><AppMark id="markTask" className="h-[30px] w-[30px]" /></TaskButton>
    </div>
    <div className="ml-auto flex h-full items-center">
      <Tray label="Show hidden icons"><Svg><path d="m.5 12 7.500-7.500 7.500 7.500" stroke="#fff" strokeWidth="1.300" /></Svg></Tray>
      <Tray label="Battery"><Svg className="h-4 w-5" box="0 0 20 16"><path d="M4.500 4.500h13v8h-13z" fill="#fff" stroke="#fff" /><path d="M18.500 7v3" stroke="#fff" strokeWidth="2" /><path d="M0 1v4h5V1zM1 0v2M4 0v2M2.500 5v5H5" fill="#15150b" stroke="#fff" /></Svg></Tray>
      <Tray label="OneDrive"><Svg className="h-5 w-5" box="0 0 20 20"><path d="M4 14a4 4 0 0 1 0-7.500A6 6 0 0 1 14.500 5 5 5 0 0 1 18 10v4z" fill="#1673c4" /><circle cx="14" cy="13" r="6" fill="#e6eefa" /><path d="M10.500 12.500a3.500 3.500 0 0 1 6-2M17.500 13.500a3.500 3.500 0 0 1-6 2M16.500 8v3h-3M11.500 18v-3h3" stroke="#3a68b8" strokeWidth="1.300" /></Svg></Tray>
      <Tray label="Volume"><Svg className="h-5 w-[22px]" box="0 0 22 20"><path d="M1 7h3l4-4v14l-4-4H1z" stroke="#fff" strokeWidth="1.200" /><path d="M11 7.500a4 4 0 0 1 0 5M14 5a7 7 0 0 1 0 10" stroke="#fff" strokeWidth="1.200" /><path d="M17 3a10 10 0 0 1 0 14" stroke="#777" strokeWidth="1.200" /></Svg></Tray>
      <Tray label="Windows Ink" w="w-[50px]"><Svg className="h-5 w-5" box="0 0 20 20"><path d="M5 11c-4-.5-5 6-1.500 7.500 3 .8 4.500-1.500 5.500-4M7 15 14 2c1-1.500 3-.5 2.300 1L10 15l-3.500 2.500zM12 12c2-4 5-5 7-3-1 1.500-3 4-6 4" stroke="#fff" strokeWidth="1.300" /></Svg></Tray>
      <Tray label="Touch keyboard" w="w-[50px]"><Svg className="h-[18px] w-[30px]" box="0 0 30 18"><path d="M.6.600h28.800v16.800H.600z" stroke="#fff" strokeWidth="1.200" /><path d="M4 5h22M4 9h22" stroke="#fff" strokeWidth="1.500" strokeDasharray="2 2" /><path d="M4 13h2M8 13h14M24 13h2" stroke="#fff" strokeWidth="1.500" /></Svg></Tray>
      <button type="button" className="flex w-[92px] flex-col items-center text-sm leading-[23px]"><span>14:06</span><span>05/04/2019</span></button>
      <Tray label="Notifications" w="w-[60px]">
        <Svg className="h-[30px] w-[30px]" box="0 0 30 30"><path d="M0 3h20v15h-6l-4 4v-4H0z" fill="#fff" /><path d="M4 8h12M4 12h12M4 16h8" stroke="#15150b" strokeWidth="1.300" /><circle cx="19.500" cy="20" r="9.500" fill="#2e2e2a" stroke="#8a8a86" /><text x="19.500" y="25" fontSize="13" textAnchor="middle" fill="#fff">1</text></Svg>
      </Tray>
      <span className="mr-[5px] h-full w-px bg-[#6a6a64]" />
    </div>
  </footer>
);

/* ---------- page ---------- */

const WinButton = ({ label, w, children }) => (
  <button type="button" aria-label={label} className={`flex h-full items-center justify-center ${w}`}>
    <Svg className="h-3 w-3" box="0 0 12 12">{children}</Svg>
  </button>
);

export default function App() {
  return (
    <div className="flex h-screen flex-col overflow-hidden bg-[#f0f0f0] font-['Noto_Sans',sans-serif] text-xs text-black">
      <header className="flex h-7 shrink-0 items-center bg-white pl-[2px]">
        <AppMark id="markTitle" className="h-5 w-5" />
        <h1 className="ml-[5px] flex-1 pt-px font-['Open_Sans',sans-serif] text-sm">Y2 : CFX - CFX-Pre</h1>
        <WinButton label="Minimize" w="w-[58px]"><path d="M0 5.500h12" stroke="#000" /></WinButton>
        <WinButton label="Restore" w="w-[59px]"><path d="M.5 2.500h9v9h-9zM2.500 2.500v-2h9v9h-2" stroke="#000" /></WinButton>
        <WinButton label="Close" w="w-[62px]"><path d="m.5.500 11 11M11.500.5l-11 11" stroke="#000" strokeWidth="1.200" /></WinButton>
      </header>
      <nav className="flex h-[22px] shrink-0 items-center gap-[17px] bg-white px-2 pt-[2px]">
        {['File', 'Edit', 'Session', 'Insert', 'Tools', 'Help'].map((m) => <button key={m} type="button">{m}</button>)}
      </nav>
      <div className="flex h-7 shrink-0 items-center border-t border-b border-t-[#e2e2e2] border-b-[#adadad]">
        <Section items={fileTools} />
        <Section items={insertTools} />
        <Section items={physicsTools} />
        <Handle />
      </div>

      <main className="grid min-h-0 flex-1 grid-cols-[678fr_1242fr]">
        <section className="flex min-h-0 flex-col pr-[9px] pb-7 pl-[7px]">
          <div role="tablist" className="pt-[6px]">
            <button type="button" role="tab" aria-selected="true" className="block h-6 border border-b-0 border-[#dadada] bg-white px-3">Outline</button>
          </div>
          <div className="flex min-h-0 flex-1 border border-[#dcdcdc] bg-white pb-[2px]">
            <ul role="tree" aria-label="Outline" className="min-h-0 flex-1 overflow-hidden border border-[#828790] bg-white">
              {rows.map((r, i) => <Row key={i} row={r} id={`node-${i}`} />)}
            </ul>
          </div>
        </section>

        <section className="flex min-h-0 min-w-0 flex-col pr-[6px] pb-[27px]">
          <div className="mt-1 flex h-7 shrink-0 items-center border-t border-[#fafafa]">
            <Section items={[['pick', 'Single select']]} className="pl-px" />
            <Section items={viewTools} />
            <Handle />
            <Tools items={[['helpList', 'Help']]} />
          </div>
          <div className="flex h-[21px] shrink-0 items-center gap-2 bg-[#c0c0c0] pt-px pl-[7px]">
            <span className="text-[13px] leading-5 font-bold">View 1</span>
            <Caret label="Choose view" />
          </div>
          <div className="min-h-0 flex-1"><Scene /></div>
          <div className="mt-[6px] flex h-[152px] shrink-0 items-start gap-[6px] border border-[#828790] bg-white px-[6px] py-[2px]">
            <Svg className="mt-[2px] h-[14px] w-[14px]" box="0 0 14 14"><path d="M7 .5a5.500 5 0 0 1 1 10L7 13l-1.500-2.500A5.500 5 0 0 1 7 .5z" fill="#f4f6ff" stroke="#9a9cb0" /><path d="M7 5v4M7 2.500V4" stroke="#1c2ae0" strokeWidth="1.600" /></Svg>
            <p className="leading-[18px] text-[#0f1fc0]">
              Automatic generation of default interfaces is not currently active. This feature can be activated via either the 'Edit &gt; Options &gt; CFX-Pre &gt; General' editor or the 'Case Options &gt; General' editor in the outline tree.
            </p>
          </div>
        </section>
      </main>

      <Taskbar />
    </div>
  );
}
